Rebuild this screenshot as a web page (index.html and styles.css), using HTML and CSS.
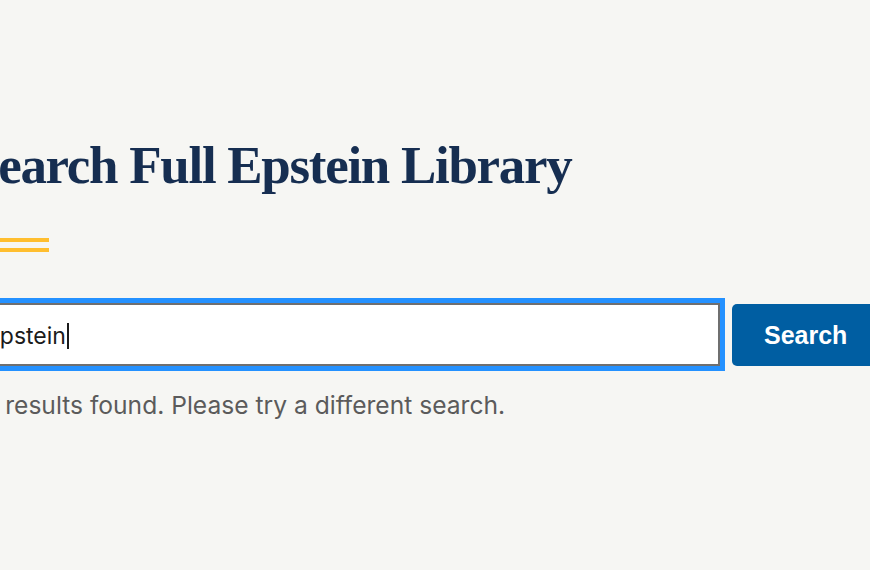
FILE: index.html
```html
<!DOCTYPE html>
<html lang="en">
<head>
<meta charset="utf-8">
<title>Search Full Epstein Library</title>
<link rel="stylesheet" href="styles.css">
</head>
<body>
<main class="page">
  <h1 class="title">Search Full Epstein Library</h1>
  <div class="rule"></div>
  <form class="search-row">
    <div class="search-box" role="textbox">Epstein<span class="caret"></span></div>
    <button class="search-btn" type="button">Search</button>
  </form>
  <p class="status">No results found. Please try a different search.</p>
</main>
</body>
</html>
```
FILE: styles.css
```css
html, body {
  margin: 0;
  padding: 0;
  background: #f6f6f3;
}
body {
  font-family: "Inter", "Liberation Sans", Arial, sans-serif;
  overflow: hidden;
  height: 570px;
}
.page {
  margin-left: -30px;
  padding-top: 138px;
}
.title {
  margin: 0;
  font-family: "Liberation Serif", serif;
  font-weight: 700;
  font-size: 53px;
  letter-spacing: -1.3px;
  line-height: 54px;
  color: #162e51;
  white-space: nowrap;
}
.rule {
  margin-top: 46px;
  width: 79px;
  height: 6px;
  border-top: 4px solid #ffbe2e;
  border-bottom: 4px solid #ffbe2e;
}
.search-row {
  margin: 51px 0 0;
  display: flex;
  align-items: flex-end;
  gap: 12px;
}
.search-box {
  box-sizing: border-box;
  width: 750px;
  height: 63px;
  flex: none;
  background: #fff;
  border: 2px solid #6f6f6f;
  outline: 5px solid #2491ff;
  padding: 3px 14px 0;
  line-height: 56px;
  font-size: 23px;
  color: #1b1b1b;
  white-space: nowrap;
}
.caret {
  display: inline-block;
  width: 2px;
  height: 26px;
  background: #1b1b1b;
  vertical-align: -5px;
  margin-left: 1px;
}
.search-btn {
  flex: none;
  width: 150px;
  height: 62px;
  border: 0;
  border-radius: 5px;
  background: #005ea2;
  color: #fff;
  font-family: "Liberation Sans", Arial, sans-serif;
  font-weight: 700;
  font-size: 25px;
  padding: 0 0 0 32px;
  text-align: left;
}
.status {
  margin: 23px 0 0;
  font-size: 24.6px;
  line-height: 33px;
  text-indent: -5px;
  color: #5b5b5b;
  white-space: nowrap;
}
```
